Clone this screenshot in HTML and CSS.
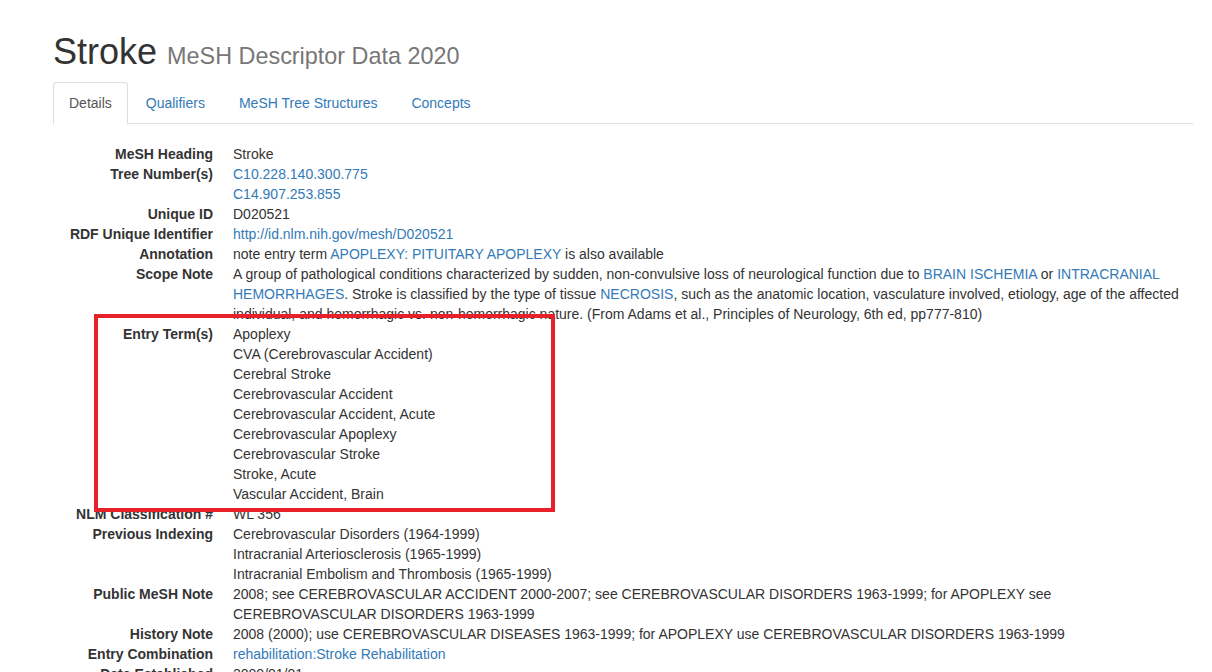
FILE: index.html
```html
<!DOCTYPE html>
<html lang="en">
<head>
  <meta charset="UTF-8" />
  <meta name="viewport" content="width=device-width, initial-scale=1.0"/>
  <title>Stroke - MeSH Descriptor Data 2020</title>
  <link rel="stylesheet" href="styles.css">
</head>
<body>
  <div class="page">
    <h1>Stroke <small>MeSH Descriptor Data 2020</small></h1>

    <ul class="nav-tabs">
      <li class="active"><a href="#details">Details</a></li>
      <li><a href="#qualifiers">Qualifiers</a></li>
      <li><a href="#trees">MeSH Tree Structures</a></li>
      <li><a href="#concepts">Concepts</a></li>
    </ul>

    <div class="tab-content">
      <dl class="details">
        <dt>MeSH Heading</dt>
        <dd>Stroke</dd>

        <dt>Tree Number(s)</dt>
        <dd>
          <a href="#">C10.228.140.300.775</a>
          <a href="#">C14.907.253.855</a>
        </dd>

        <dt>Unique ID</dt>
        <dd>D020521</dd>

        <dt>RDF Unique Identifier</dt>
        <dd><a href="#">http://id.nlm.nih.gov/mesh/D020521</a></dd>

        <dt>Annotation</dt>
        <dd>note entry term <a class="inline" href="#">APOPLEXY: PITUITARY APOPLEXY</a> is also available</dd>

        <dt>Scope Note</dt>
        <dd>A group of pathological conditions characterized by sudden, non-convulsive loss of neurological function due to <a class="inline" href="#">BRAIN ISCHEMIA</a> or <a class="inline" href="#">INTRACRANIAL HEMORRHAGES</a>. Stroke is classified by the type of tissue <a class="inline" href="#">NECROSIS</a>, such as the anatomic location, vasculature involved, etiology, age of the affected individual, and hemorrhagic vs. non-hemorrhagic nature. (From Adams et al., Principles of Neurology, 6th ed, pp777-810)</dd>

        <dt>Entry Term(s)</dt>
        <dd class="marked">
          <span class="highlight"></span>
          <div>Apoplexy</div>
          <div>CVA (Cerebrovascular Accident)</div>
          <div>Cerebral Stroke</div>
          <div>Cerebrovascular Accident</div>
          <div>Cerebrovascular Accident, Acute</div>
          <div>Cerebrovascular Apoplexy</div>
          <div>Cerebrovascular Stroke</div>
          <div>Stroke, Acute</div>
          <div>Vascular Accident, Brain</div>
        </dd>

        <dt>NLM Classification #</dt>
        <dd>WL 356</dd>

        <dt>Previous Indexing</dt>
        <dd>
          <div>Cerebrovascular Disorders (1964-1999)</div>
          <div>Intracranial Arteriosclerosis (1965-1999)</div>
          <div>Intracranial Embolism and Thrombosis (1965-1999)</div>
        </dd>

        <dt>Public MeSH Note</dt>
        <dd>2008; see CEREBROVASCULAR ACCIDENT 2000-2007; see CEREBROVASCULAR DISORDERS 1963-1999; for APOPLEXY see CEREBROVASCULAR DISORDERS 1963-1999</dd>

        <dt>History Note</dt>
        <dd>2008 (2000); use CEREBROVASCULAR DISEASES 1963-1999; for APOPLEXY use CEREBROVASCULAR DISORDERS 1963-1999</dd>

        <dt>Entry Combination</dt>
        <dd><a href="#">rehabilitation:Stroke Rehabilitation</a></dd>

        <dt>Date Established</dt>
        <dd>2000/01/01</dd>

        <dt>Date of Entry</dt>
        <dd>1999/07/08</dd>
      </dl>
    </div>
  </div>
</body>
</html>
```

FILE: styles.css
```css
body {
  margin: 0;
  font-family: "Liberation Sans", Arial, sans-serif;
  font-size: 14px;
  line-height: 20px;
  color: #333;
  background-color: #fff;
}
a {
  color: #337ab7;
  text-decoration: none;
}
.page {
  width: 1140px;
  margin-left: 53px;
}
h1 {
  margin: 32px 0 10px;
  font-size: 36px;
  font-weight: normal;
  line-height: 1.1;
}
h1 small {
  font-size: 65%;
  color: #777;
}
.nav-tabs {
  display: flex;
  margin: 0;
  padding: 0;
  list-style: none;
  border-bottom: 1px solid #ddd;
}
.nav-tabs li {
  margin-bottom: -1px;
}
.nav-tabs a {
  display: block;
  margin-right: 2px;
  padding: 10px 15px;
  border: 1px solid transparent;
  border-radius: 4px 4px 0 0;
}
.nav-tabs .active a {
  color: #555;
  background-color: #fff;
  border-color: #ddd;
  border-bottom-color: transparent;
}
.tab-content {
  padding-top: 20px;
}
.details {
  display: grid;
  grid-template-columns: 160px 1fr;
  column-gap: 20px;
  margin: 0 0 20px;
}
.details dt {
  font-weight: bold;
  text-align: right;
  white-space: nowrap;
}
.details dd {
  margin: 0;
}
.details dd a {
  display: block;
}
.details dd a.inline {
  display: inline;
}
.marked {
  position: relative;
}
.highlight {
  position: absolute;
  left: -139px;
  top: -10px;
  width: 461px;
  height: 198px;
  box-sizing: border-box;
  border: 4px solid #e8202a;
  pointer-events: none;
}
```
